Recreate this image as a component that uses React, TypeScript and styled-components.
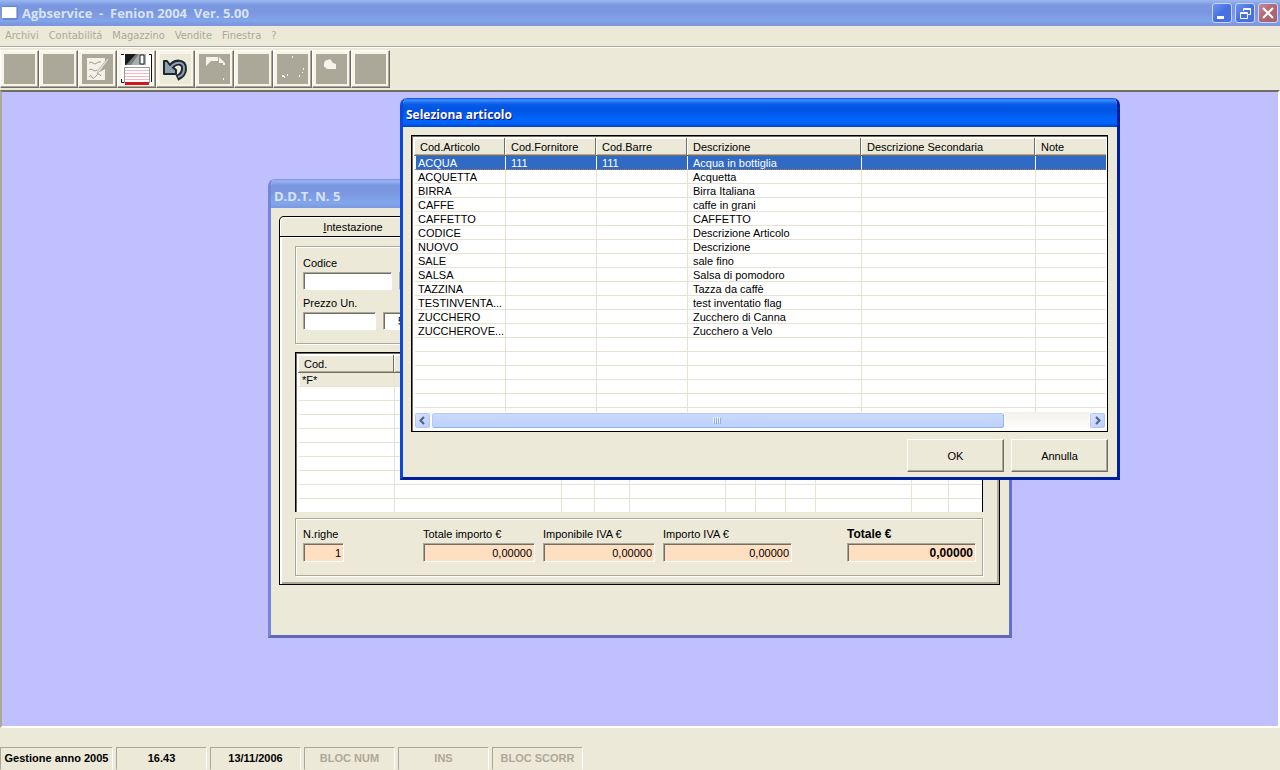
import React from "react";
import styled, { createGlobalStyle, css } from "styled-components";

const face = "#ece9d8";
const shade = "#aca899";
const dark = "#716f64";

const GlobalStyle = createGlobalStyle`
  *, *::before, *::after { box-sizing: border-box; }
  body {
    margin: 0;
    background: ${face};
    color: #000;
    font-family: "Liberation Sans", Arial, sans-serif;
    font-size: 11px;
    line-height: 14px;
  }
  button, input { font: inherit; color: inherit; margin: 0; border-radius: 0; }
`;

const Shell = styled.div`
  display: flex;
  flex-direction: column;
  min-height: 100vh;
`;

const MainTitle = styled.header`
  display: flex;
  align-items: center;
  gap: 4px;
  height: 26px;
  padding: 0 2px;
  background: linear-gradient(#9db9f0 0, #7b98e2 5px, #7a96df 12px, #82a4ea 21px, #7b97e0 24px, #8295dc 26px);
`;

const titleFont = css`
  margin: 0;
  font-family: "Open Sans", "Noto Sans", sans-serif;
  font-weight: 700;
  line-height: 18px;
  white-space: pre;
`;

const MainHeading = styled.h1`
  ${titleFont}
  flex: 1;
  font-size: 13px;
  color: #d8e4f8;
`;

const CaptionButtons = styled.div`
  display: flex;
  gap: 3px;
`;

const CaptionButton = styled.button<{ $close?: boolean }>`
  display: flex;
  width: 20px;
  height: 20px;
  padding: 0;
  border: 1px solid #cbd6f6;
  border-radius: 3px;
  background: ${(p) =>
    p.$close
      ? "linear-gradient(135deg, #c08a9c, #b0686f 50%, #a65f70)"
      : "linear-gradient(135deg, #6f95f0, #4770e4 50%, #4a70dc)"};
`;

const MenuBar = styled.nav`
  display: flex;
  gap: 10px;
  height: 22px;
  padding: 3px 5px 0;
  border-bottom: 1px solid #fff;
  box-shadow: inset 0 -1px ${shade};
`;

const MenuItem = styled.a`
  color: ${shade};
  font-family: "DejaVu Sans Condensed", Tahoma, sans-serif;
  font-size: 11px;
  text-decoration: none;
`;

const Toolbar = styled.div`
  display: flex;
  height: 42px;
  padding-top: 2px;
`;

const ToolButton = styled.button<{ $on?: boolean }>`
  width: 39px;
  height: 38px;
  padding: 1px;
  border: 1px solid;
  border-color: #fff ${dark} ${dark} #fff;
  box-shadow: inset -1px -1px ${shade}, inset 0 0 0 3px #f8f5e8;
  background: ${(p) => (p.$on ? face : shade)};
  svg { display: block; }
`;

const Workspace = styled.main`
  position: relative;
  flex: 1;
  border: solid;
  border-width: 2px;
  border-color: ${dark} #fff #fff ${shade};
  background: #c0c0ff;
  overflow: hidden;
`;

const Window = styled.section<{ $active?: boolean }>`
  position: absolute;
  display: flex;
  flex-direction: column;
  border-radius: 7px 7px 0 0;
  border: 3px solid;
  border-top: 0;
  background: ${face};
  overflow: hidden;
  border-color: ${(p) => (p.$active ? "#0a3fd8 #001ea0 #001ea0 #0a48dc" : "#7585dc #6270c8 #5d68bc #7585dc")};
`;

const DocumentWindow = styled(Window)`
  left: 266px;
  top: 87px;
  width: 744px;
  height: 459px;
`;

const DialogWindow = styled(Window)`
  left: 398px;
  top: 6px;
  width: 720px;
  height: 382px;
`;

const WindowTitle = styled.h2<{ $active?: boolean }>`
  ${titleFont}
  flex: none;
  height: 29px;
  padding: 8px 3px 0 6px;
  margin: 0 -3px;
  font-size: ${(p) => (p.$active ? 12 : 13)}px;
  color: ${(p) => (p.$active ? "#fff" : "#d8e4f8")};
  text-shadow: ${(p) => (p.$active ? "1px 1px #0f1089" : "none")};
  background: ${(p) =>
    p.$active
      ? "linear-gradient(#0a4bd6 0, #3a90ff 2px, #0a5ce8 6px, #0054e3 12px, #0066ff 22px, #0060f4 26px, #0140c4 29px)"
      : "linear-gradient(#7d8fe0 0, #9db4f0 2px, #7b97e2 6px, #7a96df 12px, #82a6ec 24px, #7b97e0 29px)"};
`;

const Tabs = styled.div`
  display: flex;
  margin: 8px 8px 0;
`;

const Tab = styled.button`
  width: 148px;
  height: 20px;
  padding: 0;
  border: 1px solid #000;
  border-bottom: 0;
  border-radius: 5px 5px 0 0;
  background: ${face};
  box-shadow: inset 1px 1px #fff;
`;

const TabPage = styled.div`
  display: flex;
  flex-direction: column;
  margin: 0 9px 0 8px;
  height: 349px;
  padding: 7px 16px 7px 15px;
  border: 1px solid #000;
  box-shadow: inset 2px 1px #fff, inset -2px -2px ${shade};
`;

const Group = styled.fieldset`
  margin: 0;
  min-width: 0;
  border: 1px solid ${shade};
  box-shadow: inset 1px 1px #fff, 1px 1px #fff;
`;

const EntryGroup = styled(Group)`
  display: flex;
  flex-direction: column;
  gap: 6px;
  height: 98px;
  margin-top: 2px;
  padding: 9px 7px;
`;

const FieldRow = styled.div`
  display: flex;
  align-items: flex-end;
  gap: 7px;
`;

const Field = styled.label<{ $bold?: boolean }>`
  display: flex;
  flex-direction: column;
  gap: 2px;
  font-size: ${(p) => (p.$bold ? 12 : 11)}px;
  font-weight: ${(p) => (p.$bold ? 700 : 400)};
  white-space: nowrap;
`;

const TextBox = styled.input<{ $w: number; $total?: boolean }>`
  width: ${(p) => p.$w}px;
  height: ${(p) => (p.$total ? 19 : 18)}px;
  padding: 0 2px 0 3px;
  border: 1px solid;
  border-color: ${shade} #fff #fff ${shade};
  box-shadow: inset 1px 1px ${dark};
  text-align: ${(p) => (p.$total ? "right" : "left")};
  background: ${(p) => (p.$total ? "#ffdfc2" : "#fff")};
`;

const DecimalsBox = styled(TextBox)`
  padding-left: 14px;
`;

const ListBox = styled.div`
  border: 1px solid #000;
  background: #fff;
  box-shadow: inset 1px 1px ${dark};
  overflow: hidden;
`;

const RowsBox = styled(ListBox)`
  height: 160px;
  margin-top: 8px;
  padding: 2px 0 0 2px;
  border-bottom: 0;
`;

const ArticleBox = styled(ListBox)`
  display: flex;
  flex-direction: column;
  height: 297px;
  margin: 8px 9px 0 8px;
  padding: 2px 1px 2px 2px;
`;

const Viewport = styled.div`
  flex: 1;
  min-height: 0;
  overflow: hidden;
`;

const Grid = styled.table`
  width: 100%;
  table-layout: fixed;
  border-collapse: separate;
  border-spacing: 0;
`;

const HeadCell = styled.th`
  height: 18px;
  padding: 1px 0 0 6px;
  background: ${face};
  border-bottom: 1px solid ${dark};
  box-shadow: inset -1px 0 ${dark}, inset 1px 1px #fff, inset 0 -1px ${shade};
  font-weight: 400;
  text-align: left;
  white-space: nowrap;
  &:last-child { box-shadow: inset 1px 1px #fff, inset 0 -1px ${shade}; }
`;

const Cell = styled.td`
  height: 14px;
  padding: 1px 0 0 5px;
  border-left: 1px solid #e6e3d2;
  border-bottom: 1px solid #e6e3d2;
  line-height: 12px;
  white-space: nowrap;
  &:first-child { border-left: 2px solid #fff; padding-left: 2px; }
`;

const Row = styled.tr<{ $selected?: boolean; $shaded?: boolean }>`
  ${(p) =>
    p.$selected &&
    css`
      color: #fff;
      ${Cell} { background: #316ac5; border-color: #fff; border-bottom: 1px dotted #b07a50; }
    `}
  ${(p) => p.$shaded && css`${Cell} { background: ${face}; }`}
`;

const ScrollBar = styled.div`
  display: flex;
  flex: none;
  height: 17px;
  background: linear-gradient(#f3f1ec, #fefefb);
`;

const ScrollButton = styled.button`
  display: flex;
  width: 17px;
  height: 17px;
  padding: 0;
  border: 1px solid #fff;
  border-radius: 3px;
  background: linear-gradient(135deg, #dce6ff, #b8ccf8);
  box-shadow: inset 0 0 0 1px #b5c7f2;
`;

const ScrollTrack = styled.div`
  display: grid;
  grid-template-columns: 573fr 84fr;
  flex: 1;
`;

const ScrollThumb = styled.div`
  display: flex;
  align-items: center;
  justify-content: center;
  border: 1px solid #fff;
  border-radius: 3px;
  background: linear-gradient(#cbdafe, #bdd0fc);
  box-shadow: inset -1px -1px #98b0e8, inset 1px 1px #b9cbf4;
`;

const DialogActions = styled.div`
  display: flex;
  justify-content: flex-end;
  gap: 7px;
  padding: 7px 9px 0;
`;

const PushButton = styled.button`
  width: 97px;
  height: 33px;
  padding: 0;
  border: 1px solid;
  border-color: #fff ${dark} ${dark} #fff;
  box-shadow: inset -1px -1px ${shade};
  background: ${face};
`;

const TotalsGroup = styled(Group)`
  display: flex;
  align-items: flex-start;
  justify-content: space-between;
  height: 58px;
  margin-top: 6px;
  padding: 8px 6px 0 7px;
`;

const TotalsSet = styled.div`
  display: flex;
  gap: 8px;
  margin-left: 24px;
`;

const StatusBar = styled.footer`
  display: flex;
  flex: none;
  gap: 3px;
  height: 42px;
  padding-top: 19px;
`;

const StatusPanel = styled.div<{ $wide?: boolean; $off?: boolean }>`
  display: flex;
  align-items: center;
  justify-content: center;
  width: ${(p) => (p.$wide ? 113 : 91)}px;
  padding-bottom: 2px;
  border: 1px solid;
  border-color: ${shade} #fff ${face} ${shade};
  font-weight: 700;
  white-space: nowrap;
  color: ${(p) => (p.$off ? shade : "#000")};
`;

const menus = ["Archivi", "Contabilitá", "Magazzino", "Vendite", "Finestra", "?"];

const articleColumns = [
  { label: "Cod.Articolo", width: 91 },
  { label: "Cod.Fornitore", width: 91 },
  { label: "Cod.Barre", width: 91 },
  { label: "Descrizione", width: 174 },
  { label: "Descrizione Secondaria", width: 174 },
  { label: "Note", width: undefined },
];

const articles: string[][] = [
  ["ACQUA", "111", "111", "Acqua in bottiglia"],
  ["ACQUETTA", "", "", "Acquetta"],
  ["BIRRA", "", "", "Birra Italiana"],
  ["CAFFE", "", "", "caffe in grani"],
  ["CAFFETTO", "", "", "CAFFETTO"],
  ["CODICE", "", "", "Descrizione Articolo"],
  ["NUOVO", "", "", "Descrizione"],
  ["SALE", "", "", "sale fino"],
  ["SALSA", "", "", "Salsa di pomodoro"],
  ["TAZZINA", "", "", "Tazza da caffè"],
  ["TESTINVENTA...", "", "", "test inventatio flag"],
  ["ZUCCHERO", "", "", "Zucchero di Canna"],
  ["ZUCCHEROVE...", "", "", "Zucchero a Velo"],
  [], [], [], [], [], [],
];

const rowColumns = [96, 167, 33, 35, 96, 30, 30, 30, 96, 37, 0];

const tools: { name: string; on?: boolean; art?: React.ReactNode }[] = [
  { name: "Nuovo" },
  { name: "Apri" },
  {
    name: "Modifica",
    art: (
      <>
        <path d="M7 6h18v5l-5 9 5-3v11H7z" fill="#f4f2e6" />
        <path d="M9 11q2-2 4 0t4 0t4-1M9 18q2-2 4 0t4 0M9 25q2-3 3 0t4-1t5 0" stroke="#9c998a" fill="none" />
        <path d="M29 7l-9 12-3 3 1-4 10-12z" fill="#e8e5d6" stroke="#a09c8c" strokeWidth=".6" />
      </>
    ),
  },
  {
    name: "Salva",
    on: true,
    art: (
      <>
        <path d="M2 2h31v31H5l-3-3z" fill="#fff" />
        <path d="M6 2h21v11H6z" fill="#777c80" />
        <path d="M6 2h11L7 13H6z" fill="#191b1d" />
        <path d="M12 13L20 2h7v11z" fill="#a9aeb1" />
        <path d="M21 3h4v9h-4z" fill="#fff" stroke="#222" />
        <path d="M2 2.500h3M30 2.500h2.500V30M2.500 27v3.500H5" stroke="#111" fill="none" />
        <path d="M5.500 31V15.500h25V31" fill="#fff" stroke="#9b9b9b" />
        <path d="M6 18.500h24M6 21.500h24M6 24.500h24M6 27.500h24" stroke="#efb9bd" />
        <path d="M6 30h24v3H6z" fill="#d11820" />
      </>
    ),
  },
  {
    name: "Annulla modifica",
    on: true,
    art: (
      <>
        <path d="M12 17C16 8 27 9 26 17C26 22 23 24 19 26" fill="none" stroke="#1c2730" strokeWidth="6" />
        <path d="M6 9h3l3 4 6 5v4H6z" fill="#8fa0ae" stroke="#1c2730" strokeWidth="2" strokeLinejoin="round" />
        <path d="M11 18C16 8 27 9 26 17C26 22 23 24 20 25" fill="none" stroke="#8fa0ae" strokeWidth="2" />
      </>
    ),
  },
  {
    name: "Copia",
    art: <path d="M9 5h12v4h-7l-5 5zM22 5l6 6h-6zM26 11h2v2h-2zM26 26h1v2h-1z" fill="#f6f4e8" />,
  },
  { name: "Elimina" },
  {
    name: "Cerca",
    art: (
      <path d="M17 4h1v2h-1zM7 23h2v1h1v2H9v-1H7zM12 22h1v2h-1zM24 23h1v2h-1zM28 16h1v2h-1zM27 20h1v1h-1z" fill="#f6f4e8" />
    ),
  },
  {
    name: "Stampa",
    art: <path d="M10 12q0-4 4-4l2-1 3 4 3 1v5h-9l-2-2h-1z" fill="#f6f4e8" />,
  },
  { name: "Esci" },
];

function MainTitleBar() {
  return (
    <MainTitle>
      <svg width="16" height="16" viewBox="0 0 16 16" aria-hidden="true">
        <path d="M0 1h15v12H0z" fill="#fff" />
        <path d="M0 1h15v1H0z" fill="#5a86e0" />
        <path d="M15 2v12H1" fill="none" stroke="#5570b8" />
      </svg>
      <MainHeading>{"Agbservice  -  Fenion 2004  Ver. 5.00"}</MainHeading>
      <CaptionButtons>
        <CaptionButton aria-label="Riduci a icona">
          <svg width="18" height="18"><path d="M4 12h7v3H4z" fill="#fff" /></svg>
        </CaptionButton>
        <CaptionButton aria-label="Ripristina">
          <svg width="18" height="18" fill="none" stroke="#fff">
            <path d="M7.500 7V4.500h7v6H12M7 5.500h8" />
            <path d="M4.500 8.500h7v6h-7zM4 9.500h8" />
          </svg>
        </CaptionButton>
        <CaptionButton $close aria-label="Chiudi">
          <svg width="18" height="18"><path d="M4 4l10 10M14 4L4 14" stroke="#fff" strokeWidth="2" /></svg>
        </CaptionButton>
      </CaptionButtons>
    </MainTitle>
  );
}

function DocumentForm() {
  return (
    <DocumentWindow aria-label="D.D.T. N. 5">
      <WindowTitle>D.D.T. N. 5</WindowTitle>
      <Tabs role="tablist">
        <Tab role="tab" aria-selected="true"><u>I</u>ntestazione</Tab>
      </Tabs>
      <TabPage role="tabpanel">
        <EntryGroup>
          <FieldRow>
            <Field>Codice<TextBox $w={89} /></Field>
            <TextBox $w={180} aria-label="Descrizione" />
          </FieldRow>
          <FieldRow>
            <Field>Prezzo Un.<TextBox $w={73} /></Field>
            <DecimalsBox $w={40} aria-label="Decimali" defaultValue="5" />
          </FieldRow>
        </EntryGroup>
        <RowsBox>
          <Grid>
            <colgroup>
              {rowColumns.map((w, i) => <col key={i} width={w || undefined} />)}
            </colgroup>
            <thead>
              <tr>
                {rowColumns.map((_, i) => <HeadCell key={i}>{i === 0 ? "Cod." : ""}</HeadCell>)}
              </tr>
            </thead>
            <tbody>
              {Array.from({ length: 10 }, (_, r) => (
                <Row key={r} $shaded={r === 0}>
                  {rowColumns.map((__, i) => <Cell key={i}>{r === 0 && i === 0 ? "*F*" : ""}</Cell>)}
                </Row>
              ))}
            </tbody>
          </Grid>
        </RowsBox>
        <TotalsGroup>
          <Field>N.righe<TextBox $total $w={41} defaultValue="1" readOnly /></Field>
          <TotalsSet>
            <Field>Totale importo €<TextBox $total $w={112} defaultValue="0,00000" readOnly /></Field>
            <Field>Imponibile IVA €<TextBox $total $w={112} defaultValue="0,00000" readOnly /></Field>
            <Field>Importo IVA €<TextBox $total $w={129} defaultValue="0,00000" readOnly /></Field>
          </TotalsSet>
          <Field $bold>Totale €<TextBox $total $w={129} defaultValue="0,00000" readOnly /></Field>
        </TotalsGroup>
      </TabPage>
    </DocumentWindow>
  );
}

function ArticleDialog() {
  return (
    <DialogWindow $active role="dialog" aria-label="Seleziona articolo">
      <WindowTitle $active>Seleziona articolo</WindowTitle>
      <ArticleBox>
        <Viewport>
          <Grid>
            <colgroup>
              {articleColumns.map((c) => <col key={c.label} width={c.width} />)}
            </colgroup>
            <thead>
              <tr>{articleColumns.map((c) => <HeadCell key={c.label}>{c.label}</HeadCell>)}</tr>
            </thead>
            <tbody>
              {articles.map((a, r) => (
                <Row key={r} $selected={r === 0}>
                  {articleColumns.map((c, i) => <Cell key={c.label}>{a[i] ?? ""}</Cell>)}
                </Row>
              ))}
            </tbody>
          </Grid>
        </Viewport>
        <ScrollBar>
          <ScrollButton aria-label="Scorri a sinistra">
            <svg width="15" height="15"><path d="M9 4L5.500 7.500 9 11" fill="none" stroke="#4d6185" strokeWidth="2" /></svg>
          </ScrollButton>
          <ScrollTrack>
            <ScrollThumb>
              <svg width="9" height="7"><path d="M.5 0v6M2.500 0v6M4.500 0v6M6.500 0v6" stroke="#eef4fe" /><path d="M1.500 1v6M3.500 1v6M5.500 1v6M7.500 1v6" stroke="#8cb0f8" /></svg>
            </ScrollThumb>
          </ScrollTrack>
          <ScrollButton aria-label="Scorri a destra">
            <svg width="15" height="15"><path d="M6 4l3.500 3.500L6 11" fill="none" stroke="#4d6185" strokeWidth="2" /></svg>
          </ScrollButton>
        </ScrollBar>
      </ArticleBox>
      <DialogActions>
        <PushButton>OK</PushButton>
        <PushButton>Annulla</PushButton>
      </DialogActions>
    </DialogWindow>
  );
}

export default function App() {
  return (
    <Shell>
      <GlobalStyle />
      <MainTitleBar />
      <MenuBar>
        {menus.map((m) => <MenuItem key={m} href="#">{m}</MenuItem>)}
      </MenuBar>
      <Toolbar role="toolbar">
        {tools.map((t) => (
          <ToolButton key={t.name} $on={t.on} aria-label={t.name}>
            {t.art && <svg width="35" height="34" viewBox="0 0 35 34">{t.art}</svg>}
          </ToolButton>
        ))}
      </Toolbar>
      <Workspace>
        <DocumentForm />
        <ArticleDialog />
      </Workspace>
      <StatusBar>
        <StatusPanel $wide>Gestione anno 2005</StatusPanel>
        <StatusPanel>16.43</StatusPanel>
        <StatusPanel>13/11/2006</StatusPanel>
        <StatusPanel $off>BLOC NUM</StatusPanel>
        <StatusPanel $off>INS</StatusPanel>
        <StatusPanel $off>BLOC SCORR</StatusPanel>
      </StatusBar>
    </Shell>
  );
}
